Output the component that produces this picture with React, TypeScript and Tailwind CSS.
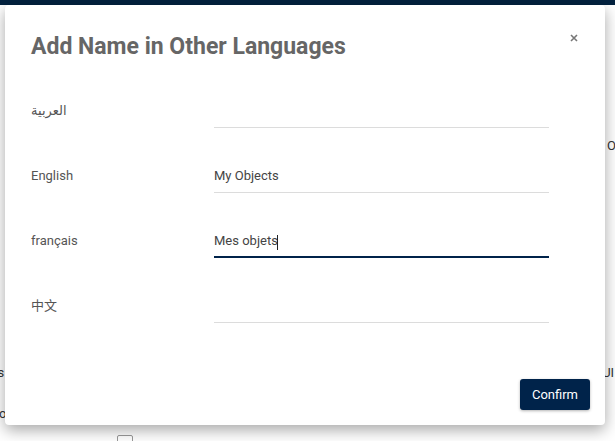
import { useState } from "react";

const NAVY = "#00234a";

const LANGS = [
  { code: "ar", label: "العربية", value: "" },
  { code: "en", label: "English", value: "My Objects" },
  { code: "fr", label: "français", value: "Mes objets" },
  { code: "zh", label: "中文", value: "" },
];

export default function App() {
  const [names, setNames] = useState<Record<string, string>>(
    Object.fromEntries(LANGS.map((l) => [l.code, l.value]))
  );

  return (
    <div
      className="relative h-[441px] w-full overflow-hidden bg-white text-[#333]"
      style={{ fontFamily: "Roboto, 'Noto Sans', 'DejaVu Sans', 'Noto Sans CJK SC', sans-serif" }}
    >
      {/* page behind the dialog */}
      <div className="h-[5px] bg-[#03223f]" />
      <div className="mt-[133px] ml-[607px] whitespace-nowrap text-[13px] leading-[15px]">
        Objects
      </div>
      <div className="mt-[212px] flex whitespace-nowrap text-[13px] leading-[15px]">
        <span className="-ml-[38px]">Aliases</span>
        <span className="ml-[598px]">UI</span>
      </div>
      <div className="mt-[26px] whitespace-nowrap text-[13px] leading-[15px]">
        <span className="-ml-[20px]">Color</span>
      </div>
      <div className="mt-[14px] ml-[117px] h-[16px] w-[16px] rounded-[2px] border border-[#999]" />

      {/* dialog */}
      <div className="absolute left-[5px] top-[5px] flex h-[420px] w-[600px] flex-col rounded-[4px] bg-white shadow-[0_5px_15px_rgba(0,0,0,0.35)]">
        <div className="flex items-start justify-between pl-[26px] pr-[27px] pt-[28px]">
          <h2 className="h-[28px] text-[23px] font-bold leading-[28px] text-[#666]">
            Add Name in Other Languages
          </h2>
          <button className="flex h-[9px] w-[9px] items-center justify-center text-[#777]">
            <svg width="8" height="8" viewBox="0 0 8 8" stroke="currentColor" strokeWidth="1.6">
              <path d="M1 1l6 6M7 1L1 7" />
            </svg>
          </button>
        </div>

        <div className="mt-[2px] pl-[26px]">
          {LANGS.map((l) => {
            const focused = l.code === "fr";
            return (
              <div key={l.code} className="flex h-[65px] items-end">
                <label className="mb-[10px] w-[183px] text-[13px] leading-[15px] text-[#555]">
                  {l.label}
                </label>
                <div className="relative">
                  <input
                    autoFocus={focused}
                    value={names[l.code]}
                    onChange={(e) => setNames({ ...names, [l.code]: e.target.value })}
                    className={
                      focused
                        ? "block h-[30px] w-[335px] border-b-2 border-[#00234a] bg-transparent pb-[3px] text-[13px] text-[#444] outline-none"
                        : "block h-[30px] w-[335px] border-b border-[#dcdcdc] bg-transparent pb-[4px] text-[13px] text-[#444] outline-none"
                    }
                  />
                  {focused && (
                    <span className="pointer-events-none absolute left-[63px] top-[7px] h-[15px] w-px bg-[#222]" />
                  )}
                </div>
              </div>
            );
          })}
        </div>

        <div className="mt-auto flex justify-end pb-[15px] pr-[15px]">
          <button
            className="h-[31px] w-[70px] rounded-[3px] text-[13px] text-white shadow-[0_1px_3px_rgba(0,0,0,0.3)]"
            style={{ backgroundColor: NAVY }}
          >
            Confirm
          </button>
        </div>
      </div>
    </div>
  );
}
